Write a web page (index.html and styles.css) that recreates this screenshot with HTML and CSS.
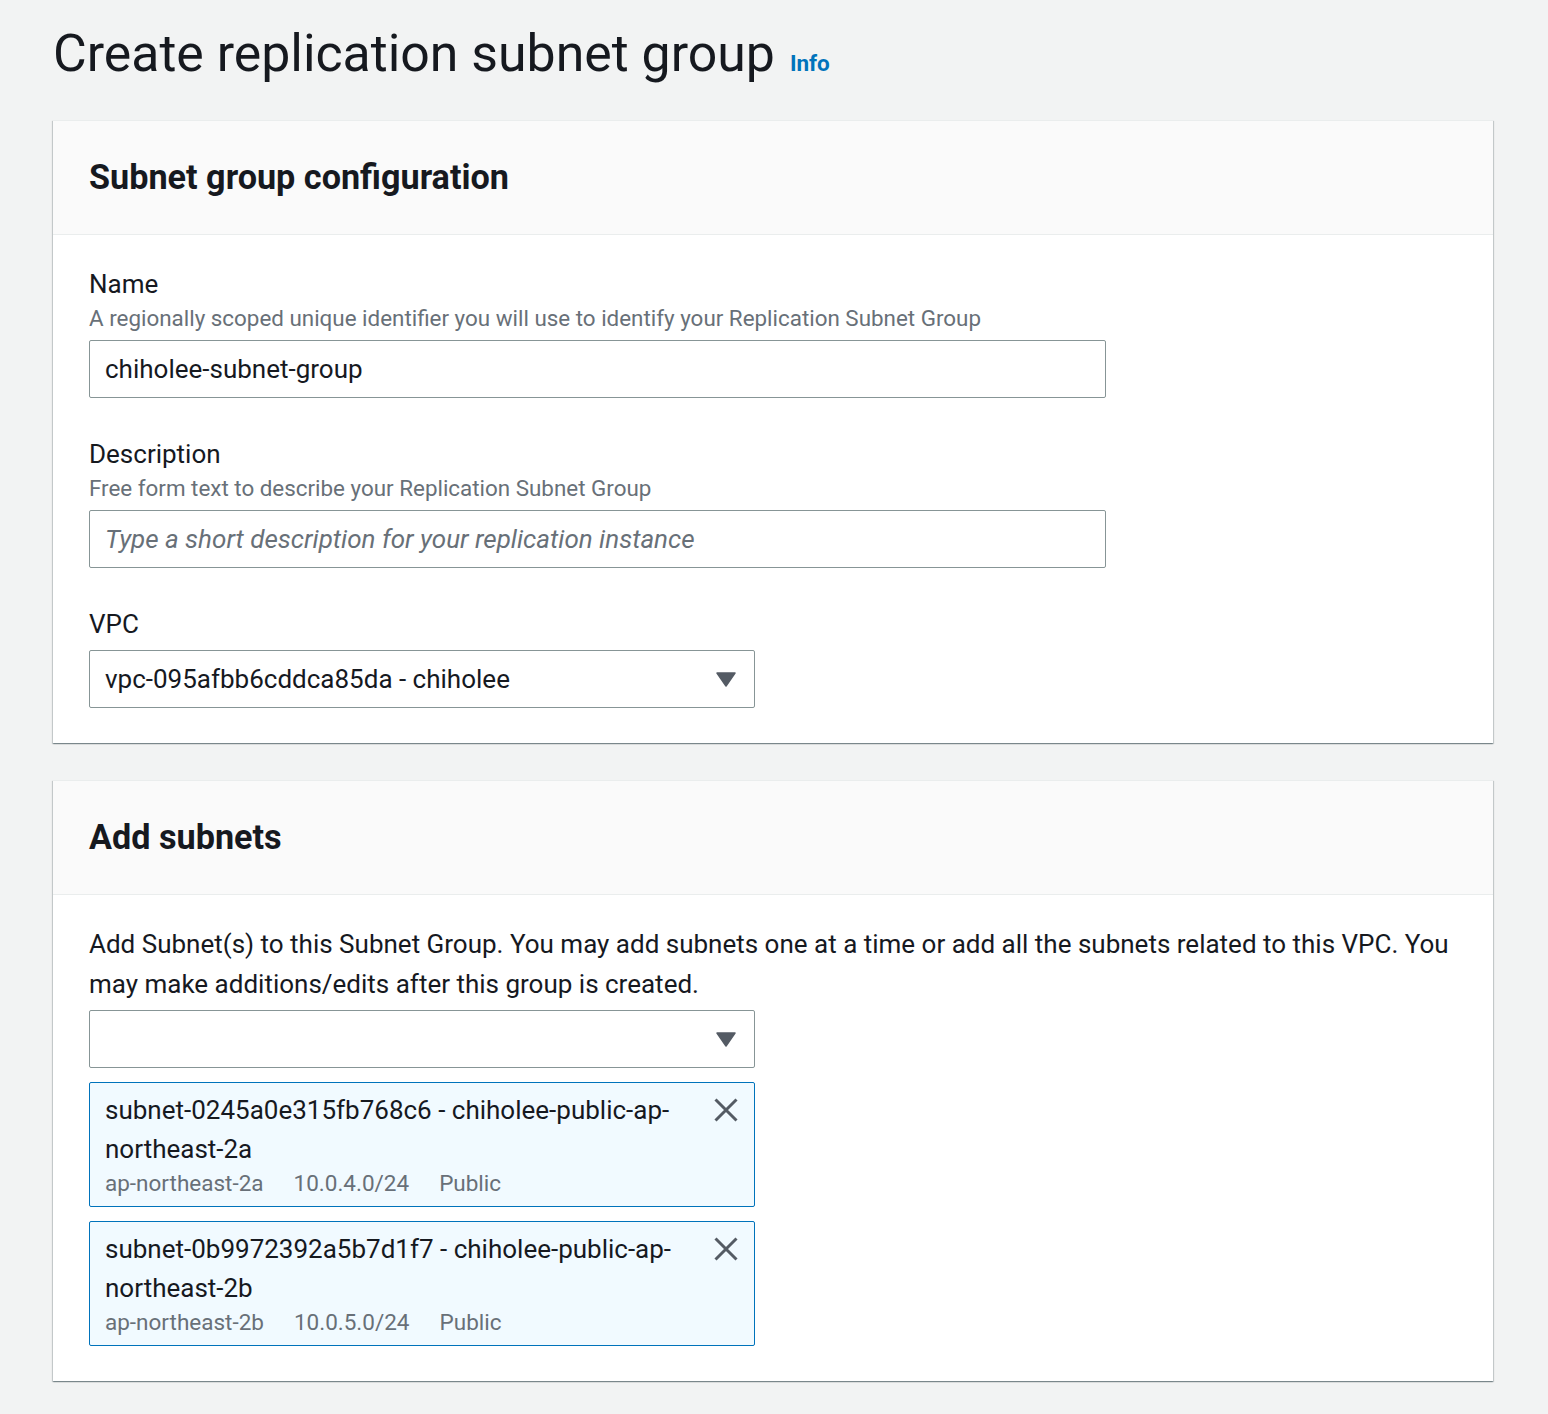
FILE: index.html
```html
<!DOCTYPE html>
<html lang="en">
<head>
<meta charset="utf-8">
<title>Create replication subnet group</title>
<link rel="stylesheet" href="styles.css">
</head>
<body>
<div class="page">
  <div class="page-header">
    <h1>Create replication subnet group</h1>
    <a class="info" href="#">Info</a>
  </div>

  <section class="panel">
    <div class="panel-header"><h2>Subnet group configuration</h2></div>
    <div class="panel-body">
      <div class="field">
        <div class="label">Name</div>
        <div class="desc">A regionally scoped unique identifier you will use to identify your Replication Subnet Group</div>
        <div class="input">chiholee-subnet-group</div>
      </div>
      <div class="field">
        <div class="label">Description</div>
        <div class="desc">Free form text to describe your Replication Subnet Group</div>
        <div class="input placeholder">Type a short description for your replication instance</div>
      </div>
      <div class="field">
        <div class="label label-solo">VPC</div>
        <div class="select">
          <span class="select-text">vpc-095afbb6cddca85da - chiholee</span>
          <svg class="caret" viewBox="0 0 24 24" width="24" height="24"><path d="M3 6h18l-9 13z" fill="#545b64" stroke="#545b64" stroke-width="1.5" stroke-linejoin="round"/></svg>
        </div>
      </div>
    </div>
  </section>

  <section class="panel">
    <div class="panel-header"><h2>Add subnets</h2></div>
    <div class="panel-body">
      <p class="intro">Add Subnet(s) to this Subnet Group. You may add subnets one at a time or add all the subnets related to this VPC. You may make additions/edits after this group is created.</p>
      <div class="select select-add">
        <span class="select-text"></span>
        <svg class="caret" viewBox="0 0 24 24" width="24" height="24"><path d="M3 6h18l-9 13z" fill="#545b64" stroke="#545b64" stroke-width="1.5" stroke-linejoin="round"/></svg>
      </div>
      <div class="tokens">
        <div class="token">
          <div class="token-content">
            <div class="token-title">subnet-0245a0e315fb768c6 - chiholee-public-ap-northeast-2a</div>
            <div class="token-meta"><span>ap-northeast-2a</span><span>10.0.4.0/24</span><span>Public</span></div>
          </div>
          <svg class="dismiss" viewBox="0 0 24 24" width="24" height="24"><path d="M1.5 1.5L22.5 22.5M22.5 1.5L1.5 22.5" stroke="#545b64" stroke-width="3" fill="none"/></svg>
        </div>
        <div class="token">
          <div class="token-content">
            <div class="token-title">subnet-0b9972392a5b7d1f7 - chiholee-public-ap-northeast-2b</div>
            <div class="token-meta"><span>ap-northeast-2b</span><span>10.0.5.0/24</span><span>Public</span></div>
          </div>
          <svg class="dismiss" viewBox="0 0 24 24" width="24" height="24"><path d="M1.5 1.5L22.5 22.5M22.5 1.5L1.5 22.5" stroke="#545b64" stroke-width="3" fill="none"/></svg>
        </div>
      </div>
    </div>
  </section>
</div>
</body>
</html>
```

FILE: styles.css
```css
* { box-sizing: border-box; }

body {
  margin: 0;
  background: #f2f3f3;
  font-family: Roboto, "Liberation Sans", sans-serif;
  color: #16191f;
}

.page {
  padding: 24px 55px 32px 53px;
}

.page-header {
  display: flex;
  align-items: baseline;
  margin-bottom: 36px;
}

h1 {
  margin: 0;
  font-size: 51.8px;
  line-height: 60px;
  font-weight: 400;
  color: #16191f;
}

.info {
  margin-left: 15px;
  font-size: 22.5px;
  font-weight: 700;
  color: #0073bb;
  text-decoration: none;
}

.panel {
  background: #fff;
  border-top: 1px solid #eaeded;
  box-shadow: 0 1px 1px 0 rgba(0, 28, 36, 0.3), 1px 1px 1px 0 rgba(0, 28, 36, 0.15), -1px 1px 1px 0 rgba(0, 28, 36, 0.15);
  margin-bottom: 37px;
}

.panel-header {
  background: #fafafa;
  border-bottom: 1px solid #eaeded;
  padding: 36px 37px 37px 36px;
}

h2 {
  margin: 0;
  font-size: 34.2px;
  line-height: 40px;
  font-weight: 700;
}

.panel-body {
  padding: 33px 37px 35px 36px;
}

.field + .field {
  margin-top: 40px;
}

.label {
  font-size: 26px;
  line-height: 32px;
}

.label-solo {
  margin-bottom: 10px;
}

.desc {
  margin-top: 4px;
  font-size: 22.4px;
  line-height: 28px;
  color: #687078;
  margin-bottom: 8px;
}

.input {
  width: 1017px;
  height: 58px;
  border: 1px solid #879596;
  border-radius: 2px;
  padding: 0 15px;
  font-size: 26px;
  line-height: 56px;
  background: #fff;
}

.placeholder {
  font-style: italic;
  color: #687078;
}

.select {
  width: 666px;
  height: 58px;
  border: 1px solid #879596;
  border-radius: 2px;
  padding: 0 16px 0 15px;
  display: flex;
  align-items: center;
  justify-content: space-between;
  font-size: 26px;
  background: #fff;
}

.caret {
  flex: none;
}

.intro {
  margin: -4px 0 0;
  font-size: 26px;
  line-height: 40px;
}

.select-add {
  margin-top: 6px;
}

.tokens {
  margin-top: 14px;
  display: flex;
  flex-direction: column;
  gap: 14px;
}

.token {
  width: 666px;
  border: 1px solid #0073bb;
  border-radius: 2px;
  background: #f1faff;
  padding: 8px 16px 9px 15px;
  display: flex;
  gap: 20px;
}

.token-content {
  flex: 1;
  min-width: 0;
}

.token-title {
  font-size: 26px;
  line-height: 39px;
}

.token-meta {
  display: flex;
  gap: 30px;
  font-size: 22.5px;
  line-height: 28px;
  color: #687078;
}

.dismiss {
  flex: none;
  margin-top: 7px;
}
```
